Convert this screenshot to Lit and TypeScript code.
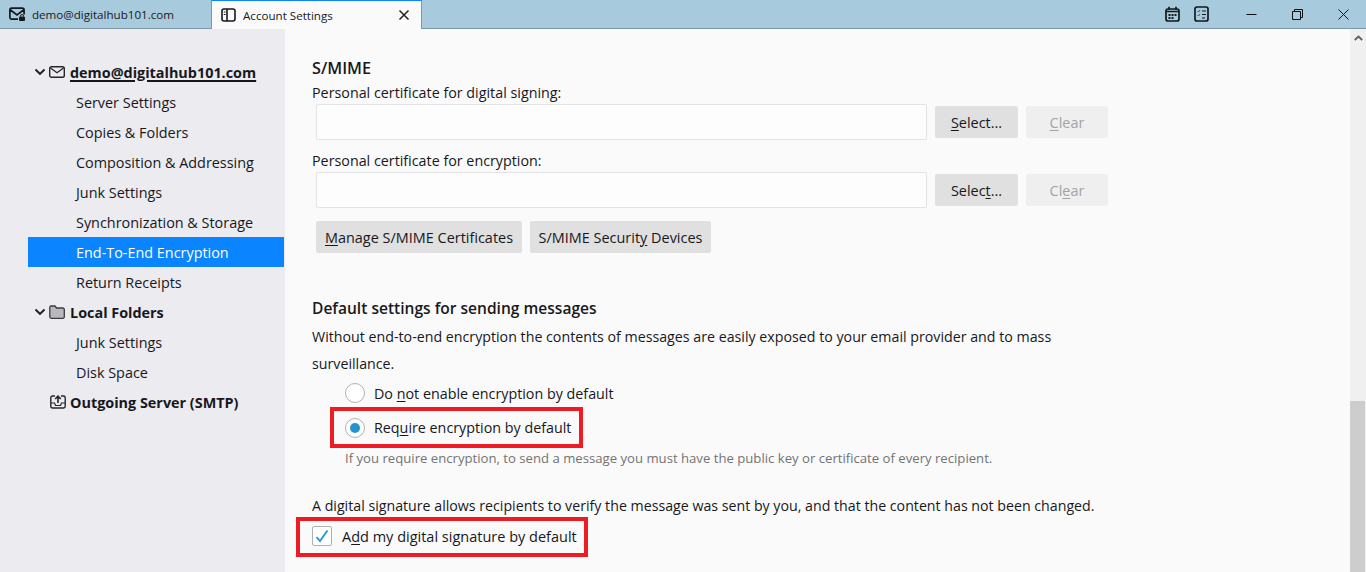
import { LitElement, html, css } from "lit";
import { customElement } from "lit/decorators.js";

const chevron = html`<svg class="chev" width="12" height="12" viewBox="0 0 12 12"><path d="M1.500 3.500 6 8l4.500-4.500" fill="none" stroke="#1a1a1e" stroke-width="1.800"/></svg>`;

@customElement("app-root")
export class AppRoot extends LitElement {
  static styles = css`
    :host { display: block; height: 572px; overflow: hidden; font-family: "Open Sans", "Noto Sans", sans-serif; font-size: 14.3px; color: #18181c; background: #fafafa; }
    u { text-underline-offset: 2px; text-decoration-thickness: 1px; }
    .tabbar { height: 28px; background: #a7cbdc; border-bottom: 1px solid #7c98a6; display: flex; align-items: stretch; }
    .tab { width: 211px; display: flex; align-items: center; font-size: 11.6px; padding-left: 9px; box-sizing: border-box; gap: 7px; }
    .tab.active { height: 29px; background: #fafafa; border-top: 1px solid #0a84ff; border-left: 1px solid #7c98a6; border-right: 1px solid #7c98a6; }
    .tab.active span { flex: 1; }
    .tab.active .x { margin-right: 11px; }
    .tabspace { flex: 1; }
    .tools { display: flex; align-items: center; }
    .tools svg { display: block; }
    .tool { width: 29px; display: flex; justify-content: center; }
    .gap { width: 12px; }
    .tools .win { width: 46px; height: 28px; display: flex; align-items: center; justify-content: center; }
    .main { display: flex; height: 543px; }
    .side { width: 285px; flex: none; background: #ebebf0; padding: 28px 1px 0 28px; box-sizing: border-box; }
    .row { height: 30px; display: flex; align-items: center; padding-left: 48px; font-size: 14.4px; }
    .row.sel { background: #0a84ff; color: #fff; }
    .row.top { padding-left: 6px; font-weight: 700; gap: 3px; }
    .row.top.out { padding-left: 22px; }
    .row.top .text { margin-left: 2px; }
    .row.top.out .text { margin-left: 1px; }
    .row.top u { text-decoration-thickness: 1.5px; }
    .chev { flex: none; }
    .content { flex: 1; padding: 0 0 0 27px; min-width: 0; }
    h2 { margin: 0; font-weight: 600; line-height: 20px; }
    .h1 { padding-top: 29px; font-size: 16.2px; }
    .label { line-height: 20px; margin-top: 5px; }
    .fieldrow { display: flex; align-items: center; margin: 1px 0 0 4px; height: 36px; }
    .input { width: 611px; height: 36px; box-sizing: border-box; background: #fdfdfd; border: 1px solid #e3e3e5; border-radius: 2px; }
    .btn { height: 32px; display: flex; align-items: center; justify-content: center; background: #e0e0e1; border-radius: 2px; font-size: 14.45px; box-sizing: border-box; }
    .b-sel { width: 83px; margin-left: 8px; }
    .b-clear { width: 82px; margin-left: 8px; background: #efefef; color: #a3a3a6; }
    .field2 { margin-top: 11px; }
    .btns { display: flex; gap: 8px; margin: 13px 0 0 4px; }
    .b1 { width: 206px; }
    .b2 { width: 181px; }
    .h2 { margin-top: 45px; font-size: 15.55px; }
    .para { width: 800px; line-height: 27px; margin-top: 5px; font-size: 14.23px; }
    .opt { display: flex; align-items: center; height: 26px; margin-left: 33px; margin-top: 3px; }
    .radio { width: 20px; height: 20px; border-radius: 50%; border: 1px solid #b1b1b3; background: #fff; box-sizing: border-box; display: flex; align-items: center; justify-content: center; flex: none; margin-right: 9px; }
    .radio i { width: 10px; height: 10px; border-radius: 50%; background: #2292d0; display: block; }
    .mark { display: inline-flex; align-items: center; border: 4px solid #ed1c24; box-sizing: border-box; }
    .m1 { width: 253px; height: 41px; margin: 1px 0 0 18px; padding-left: 11px; vertical-align: top; }
    .hint { font-size: 13.15px; color: #737373; margin: 0 0 0 33px; line-height: 20px; }
    .sig { margin-top: 28px; line-height: 20px; font-size: 14.2px; }
    .m2 { width: 292px; height: 40px; margin: 1px 0 0 -16px; padding: 0 0 2px 12px; }
    .m2 span { font-size: 14.5px; }
    .check { width: 20px; height: 20px; border: 1px solid #b1b1b3; border-radius: 2px; background: #fff; box-sizing: border-box; margin-right: 10px; flex: none; display: flex; align-items: center; justify-content: center; }
    .scroll { width: 16px; flex: none; background: #f0f0f0; display: flex; flex-direction: column; justify-content: space-between; }
    .scroll .up { display: flex; justify-content: center; padding-top: 6px; }
    .thumb { height: 171px; width: 15px; background: #cdcdcd; }
  `;

  render() {
    return html`
      <div class="tabbar">
        <div class="tab">
          <svg width="16" height="14" viewBox="0 0 16 14"><path d="M9 12.200H2.500A1.700 1.700 0 0 1 .9 10.500V3A1.800 1.800 0 0 1 2.700 1.200h10.600A1.800 1.800 0 0 1 15.100 3v4.500M1.500 3 8 8l6.500-5" fill="none" stroke="#15191c" stroke-width="1.700"/><rect x="10" y="9.500" width="6" height="4.500" rx="1" fill="#15191c"/><path d="M11.500 9.500V9a1.500 1.500 0 0 1 3 0v.5" fill="none" stroke="#15191c"/></svg>
          <span>demo@digitalhub101.com</span>
        </div>
        <div class="tab active">
          <svg width="15" height="14" viewBox="0 0 15 14"><rect x="1" y="1" width="13" height="12" rx="2" fill="none" stroke="#15191c" stroke-width="1.600"/><path d="M6 1v12" stroke="#15191c" stroke-width="1.600"/><path d="M2.800 4h1.800M2.800 6.500h1.800" stroke="#15191c" stroke-width="1.200"/></svg>
          <span>Account Settings</span>
          <svg class="x" width="12" height="12" viewBox="0 0 12 12"><path d="M1.500 1.500l9 9M10.500 1.500l-9 9" stroke="#222" stroke-width="1.500"/></svg>
        </div>
        <div class="tabspace"></div>
        <div class="tools">
          <div class="tool"><svg width="15" height="16" viewBox="0 0 15 16"><rect x="1" y="3" width="13" height="12" rx="2" fill="none" stroke="#15191c" stroke-width="1.700"/><path d="M4 .8v3M11 .8v3M1 5.500h13" stroke="#15191c" stroke-width="1.700"/><path d="M3.500 8h2v2h-2zM6.500 8h2v2h-2zM9.500 8h2v2h-2zM3.500 11h2v2h-2zM6.500 11h2v2h-2z" fill="#15191c"/></svg></div>
          <div class="tool"><svg width="15" height="16" viewBox="0 0 15 16"><rect x="1" y="1" width="13" height="14" rx="2" fill="none" stroke="#15191c" stroke-width="1.700"/><path d="M3.500 5l1 1 1.500-2M3.500 9l1 1 1.500-2" fill="none" stroke="#4a5257" stroke-width="1"/><path d="M8 5h4M8 8.500h4M8 12h3" stroke="#15191c" stroke-width="1.100"/></svg></div>
          <div class="gap"></div>
          <div class="win"><svg width="11" height="11" viewBox="0 0 11 11"><path d="M.5 5.500h10" stroke="#111" stroke-width="1"/></svg></div>
          <div class="win"><svg width="11" height="11" viewBox="0 0 11 11"><path d="M.5 2.500h8v8h-8zM2.500 2.500v-2h8v8h-2" fill="none" stroke="#111" stroke-width="1"/></svg></div>
          <div class="win"><svg width="11" height="11" viewBox="0 0 11 11"><path d="M.5.500l10 10M10.500.500l-10 10" stroke="#111" stroke-width="1"/></svg></div>
        </div>
      </div>
      <div class="main">
        <div class="side">
          <div class="row top">${chevron}
            <svg width="16" height="12" viewBox="0 0 16 12"><rect x=".7" y=".7" width="14.600" height="10.600" rx="1.800" fill="none" stroke="#26262a" stroke-width="1.400"/><path d="M1.500 2 8 6.700 14.500 2" fill="none" stroke="#26262a" stroke-width="1.300"/></svg>
            <span class="text"><u>demo@digitalhub101.com</u></span></div>
          <div class="row">Server Settings</div>
          <div class="row">Copies &amp; Folders</div>
          <div class="row">Composition &amp; Addressing</div>
          <div class="row">Junk Settings</div>
          <div class="row">Synchronization &amp; Storage</div>
          <div class="row sel">End-To-End Encryption</div>
          <div class="row">Return Receipts</div>
          <div class="row top">${chevron}
            <svg width="16" height="14" viewBox="0 0 16 14"><path d="M.8 12V2.500A1.500 1.500 0 0 1 2.200 1H6l1.500 2h6.300a1.500 1.500 0 0 1 1.500 1.500V12a1.500 1.500 0 0 1-1.500 1.300H2.200A1.500 1.500 0 0 1 .8 12z" fill="#b9b9bd" stroke="#3a3a3e" stroke-width="1.300"/></svg>
            <span class="text">Local Folders</span></div>
          <div class="row">Junk Settings</div>
          <div class="row">Disk Space</div>
          <div class="row top out">
            <svg width="16" height="14" viewBox="0 0 16 14"><path d="M5 1H2.500A1.700 1.700 0 0 0 .8 2.700v8.600A1.700 1.700 0 0 0 2.500 13h11a1.700 1.700 0 0 0 1.700-1.700V2.700A1.700 1.700 0 0 0 13.500 1H11" fill="none" stroke="#26262a" stroke-width="1.400"/><path d="M1 8h3.500l1 2.500h5l1-2.500H15" fill="none" stroke="#26262a" stroke-width="1.200"/><path d="M8 8V1.500M5.200 4 8 1.200 10.800 4" fill="none" stroke="#26262a" stroke-width="1.600"/></svg>
            <span class="text">Outgoing Server (SMTP)</span></div>
        </div>
        <div class="content">
          <h2 class="h1">S/MIME</h2>
          <div class="label">Personal certificate for digital signing:</div>
          <div class="fieldrow"><div class="input"></div><div class="btn b-sel"><span><u>S</u>elect...</span></div><div class="btn b-clear"><span><u>C</u>lear</span></div></div>
          <div class="label field2">Personal certificate for encryption:</div>
          <div class="fieldrow"><div class="input"></div><div class="btn b-sel"><span>Selec<u>t</u>...</span></div><div class="btn b-clear"><span>Cl<u>e</u>ar</span></div></div>
          <div class="btns"><div class="btn b1"><span><u>M</u>anage S/MIME Certificates</span></div><div class="btn b2"><span>S/MIME Securit<u>y</u> Devices</span></div></div>
          <h2 class="h2">Default settings for sending messages</h2>
          <div class="para">Without end-to-end encryption the contents of messages are easily exposed to your email provider and to mass surveillance.</div>
          <div class="opt"><div class="radio"></div><span>Do <u>n</u>ot enable encryption by default</span></div>
          <div class="mark m1"><div class="radio"><i></i></div><span>Req<u>u</u>ire encryption by default</span></div>
          <div class="hint">If you require encryption, to send a message you must have the public key or certificate of every recipient.</div>
          <div class="sig">A digital signature allows recipients to verify the message was sent by you, and that the content has not been changed.</div>
          <div class="mark m2"><div class="check"><svg width="14" height="14" viewBox="0 0 14 14"><path d="M1.500 8l3.500 4L12.500 1.500" fill="none" stroke="#2292d0" stroke-width="1.800"/></svg></div><span>A<u>d</u>d my digital signature by default</span></div>
        </div>
        <div class="scroll">
          <div class="up"><svg width="9" height="6" viewBox="0 0 9 6"><path d="M.8 5 4.500 1.500 8.200 5" fill="none" stroke="#606060" stroke-width="1.800"/></svg></div>
          <div class="thumb"></div>
        </div>
      </div>`;
  }
}
